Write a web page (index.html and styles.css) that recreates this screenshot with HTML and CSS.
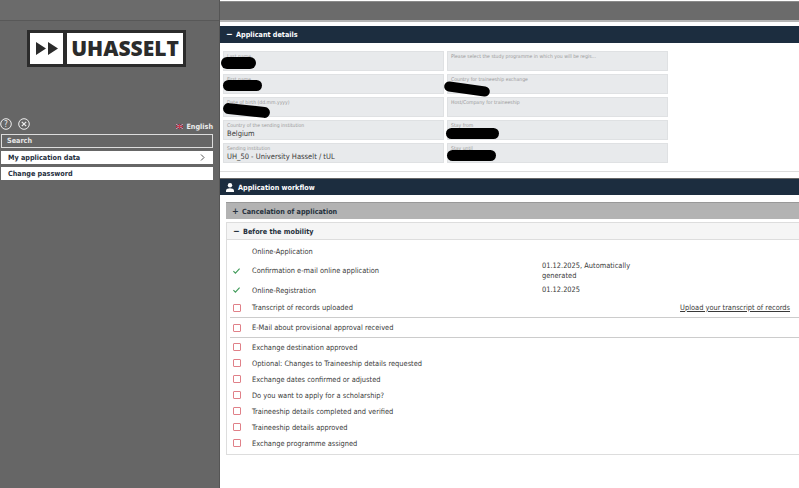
FILE: index.html
```html
<!DOCTYPE html>
<html lang="en">
<head>
<meta charset="utf-8">
<title>Application</title>
<link rel="stylesheet" href="styles.css">
</head>
<body>
<div class="app">
  <aside class="side">
    <div class="side-top"></div>
    <div class="logo">
      <div class="logo-mark"><svg width="22" height="13" viewBox="0 0 22 13"><path d="M0 0l10 6.500L0 13zM12 0l10 6.500L12 13z" fill="#2b2b2b"/></svg></div>
      <div class="logo-word">UHASSELT</div>
    </div>
    <div class="tools">
      <svg class="tool" width="12" height="12" viewBox="0 0 12 12"><circle cx="6" cy="6" r="5.300" fill="none" stroke="#eee"/><text x="6" y="8.700" class="tool-q">?</text></svg>
      <svg class="tool" width="12" height="12" viewBox="0 0 12 12"><circle cx="6" cy="6" r="5.300" fill="none" stroke="#eee"/><path d="M3.800 3.800l4.400 4.400M8.200 3.800l-4.400 4.400" stroke="#eee" stroke-width="1.200"/></svg>
      <div class="lang"><svg width="7" height="5" viewBox="0 0 7 5"><rect width="7" height="5" fill="#6b3a55"/><path d="M0 0l7 5M7 0L0 5" stroke="#e8c8cc" stroke-width=".8"/><path d="M3.500 0v5M0 2.500h7" stroke="#c23a4a"/></svg>English</div>
    </div>
    <nav class="menu">
      <div class="search">Search</div>
      <div class="item">My application data<svg width="5" height="7" viewBox="0 0 5 7"><path d="M1 .5l3 3-3 3" fill="none" stroke="#555"/></svg></div>
      <div class="item">Change password</div>
    </nav>
  </aside>
  <main class="main">
    <div class="topband"></div>
    <section class="panel">
      <h2 class="bar"><span class="sign">−</span>Applicant details</h2>
      <div class="fields-wrap">
        <div class="fields">
          <div class="field"><label>Last name</label></div>
          <div class="field"><label>Please select the study programme in which you will be regis...</label></div>
          <div class="field"><label>First name</label></div>
          <div class="field"><label>Country for traineeship exchange</label></div>
          <div class="field"><label>Date of birth (dd.mm.yyyy)</label></div>
          <div class="field"><label>Host/Company for traineeship</label></div>
          <div class="field"><label>Country of the sending institution</label><span>Belgium</span></div>
          <div class="field"><label>Stay from</label></div>
          <div class="field"><label>Sending institution</label><span>UH_50 - University Hasselt / tUL</span></div>
          <div class="field"><label>Stay until</label></div>
        </div>
      </div>
      <i class="blob b1"></i><i class="blob b2"></i><i class="blob b3"></i><i class="blob b4"></i><i class="blob b5"></i><i class="blob b6"></i>
    </section>
    <section class="wf">
      <h2 class="bar bar-wf"><svg width="8" height="9" viewBox="0 0 8 9"><circle cx="4" cy="2.300" r="2.200" fill="#fff"/><path d="M0 9V7.500C0 6 2.300 5.300 4 5.300s4 .7 4 2.200V9z" fill="#fff"/></svg>Application workflow</h2>
      <div class="acc-closed"><span class="sign">+</span>Cancelation of application</div>
      <div class="acc">
        <div class="acc-head"><span class="sign">−</span>Before the mobility</div>
        <div class="rows">
          <div class="row r-a"><span class="ic"></span><span class="lbl">Online-Application</span></div>
          <div class="row r-b"><span class="ic"><svg width="7" height="6" viewBox="0 0 7 6"><path d="M.4 3.200l2 2L6.600.6" fill="none" stroke="#3f9a58" stroke-width="1.100"/></svg></span><span class="lbl">Confirmation e-mail online application</span><span class="date">01.12.2025, Automatically generated</span></div>
          <div class="row r-c"><span class="ic"><svg width="7" height="6" viewBox="0 0 7 6"><path d="M.4 3.200l2 2L6.600.6" fill="none" stroke="#3f9a58" stroke-width="1.100"/></svg></span><span class="lbl">Online-Registration</span><span class="date">01.12.2025</span></div>
          <div class="row r-d"><span class="ic no"></span><span class="lbl">Transcript of records uploaded</span><a class="link">Upload your transcript of records</a></div>
          <div class="row r-e"><span class="ic no"></span><span class="lbl">E-Mail about provisional approval received</span></div>
          <div class="row"><span class="ic no"></span><span class="lbl">Exchange destination approved</span></div>
          <div class="row"><span class="ic no"></span><span class="lbl">Optional: Changes to Traineeship details requested</span></div>
          <div class="row"><span class="ic no"></span><span class="lbl">Exchange dates confirmed or adjusted</span></div>
          <div class="row"><span class="ic no"></span><span class="lbl">Do you want to apply for a scholarship?</span></div>
          <div class="row"><span class="ic no"></span><span class="lbl">Traineeship details completed and verified</span></div>
          <div class="row"><span class="ic no"></span><span class="lbl">Traineeship details approved</span></div>
          <div class="row"><span class="ic no"></span><span class="lbl">Exchange programme assigned</span></div>
        </div>
      </div>
    </section>
  </main>
</div>
</body>
</html>
```

FILE: styles.css
```css
* { box-sizing: border-box; }
html, body { margin: 0; height: 100%; overflow: hidden; }
body { font-family: "DejaVu Sans Condensed", "DejaVu Sans", sans-serif; font-stretch: condensed; background: #fff; color: #3a3a3a; }
.app { display: flex; width: 799px; height: 488px; }

.side { width: 219px; flex: none; background: #666; display: flex; flex-direction: column; }
.side-top { height: 21px; background: #6b6b6b; border-bottom: 1px solid #585858; }
.logo { margin: 9px 0 0 27px; width: 159px; height: 37px; background: #fff; border: 3px solid #2b2b2b; display: flex; }
.logo-mark { width: 37px; flex: none; border-right: 4px solid #2b2b2b; display: flex; align-items: center; justify-content: center; }
.logo-word { flex: 1; font: 800 21px/31px "Open Sans", "Liberation Sans", sans-serif; color: #2b2b2b; text-align: center; }
.tools { display: flex; align-items: center; gap: 6px; margin: 51px 6px 0 0; height: 12px; }
.tool-q { font-size: 8px; fill: #eee; text-anchor: middle; }
.lang { margin: 5px 0 0 auto; font-size: 7.200px; font-weight: 700; color: #eee; display: flex; align-items: center; gap: 3px; }
.menu { margin: 4px 6px 0 1px; display: flex; flex-direction: column; gap: 3px; }
.search { height: 14px; border: 1px solid #ddd; background: #666; color: #e6e6e6; font-size: 7.200px; font-weight: 700; line-height: 12px; padding-left: 5px; }
.item { height: 13px; background: #fff; color: #1f2f40; font-size: 7.200px; font-weight: 700; line-height: 13px; padding: 0 8px 0 7px; display: flex; align-items: center; justify-content: space-between; }

.main { flex: 1; min-width: 0; border-left: 1px solid #555; }
.topband { height: 21px; margin-top: 1px; background: #6b6b6b; border-top: 1px solid #8a8a8a; border-bottom: 2px solid #b5b5b5; }
.panel { position: relative; }
.bar { margin: 4px 0 0; height: 17px; background: #1c2d3f; color: #fff; font-size: 7.200px; font-weight: 700; line-height: 17px; padding-left: 6px; display: flex; align-items: center; }
.sign { display: inline-block; width: 10px; font-size: 9px; font-weight: 700; }
.fields-wrap { padding: 8px 0 8px 3px; border-bottom: 1px solid #ddd; }
.fields { display: grid; grid-template-columns: 221px 221px; gap: 3px; }
.field { height: 20px; background: #e8eaec; border: 1px solid #dfe1e3; padding: 1px 3px 0; overflow: hidden; }
.field label { display: block; font-size: 5.100px; line-height: 6px; color: #999; white-space: nowrap; }
.field span { display: block; margin-top: 1px; font-size: 7.500px; line-height: 9px; color: #3a3a3a; }
.blob { position: absolute; background: #000; border-radius: 6px; }
.b1 { left: 1px; top: 31px; width: 35px; height: 12px; }
.b2 { left: 3px; top: 54px; width: 39px; height: 11px; }
.b3 { left: 3px; top: 79px; width: 47px; height: 11px; transform: rotate(6deg); }
.b4 { left: 224px; top: 58px; width: 46px; height: 10px; transform: rotate(8deg); }
.b5 { left: 226px; top: 102px; width: 53px; height: 11px; }
.b6 { left: 227px; top: 124px; width: 49px; height: 11px; }
.wf { margin-top: 6px; }
.bar-wf { margin-top: 0; border-top: 1px solid #666; }
.bar-wf svg { margin-right: 4px; }
.acc-closed { margin: 7px 0 0 6px; height: 17px; background: #b3b3b3; color: #26313d; font-size: 7.200px; font-weight: 700; line-height: 17px; padding-left: 6px; border-top: 1px solid #999; }
.acc { margin: 3px 0 0 6px; border: 1px solid #ddd; border-right: 0; }
.acc-head { height: 17px; background: #f5f5f5; border-bottom: 1px solid #ddd; color: #26313d; font-size: 7.200px; font-weight: 700; line-height: 16px; padding-left: 6px; }
.rows { display: flex; flex-direction: column; padding-bottom: 3px; }
.row { position: relative; display: flex; align-items: center; height: 16px; font-size: 7.400px; color: #3a3a3a; padding-left: 6px; }
.r-a { height: 22px; }
.r-b { height: 17px; }
.r-c { height: 22px; }
.r-d, .r-e { border-bottom: 1px solid #ccc; margin-left: 3px; padding-left: 3px; }
.r-d { height: 17px; padding-bottom: 3px; }
.r-e { height: 20px; margin-bottom: 1px; }
.ic { width: 19px; flex: none; display: flex; align-items: center; }
.no::before { content: ""; width: 6px; height: 6px; border: 1px solid #e08088; border-radius: 1px; display: block; }
.lbl { width: 290px; flex: none; white-space: nowrap; }
.date { width: 93px; flex: none; line-height: 10px; }
.link { position: absolute; right: 9px; text-decoration: underline; white-space: nowrap; }
```
